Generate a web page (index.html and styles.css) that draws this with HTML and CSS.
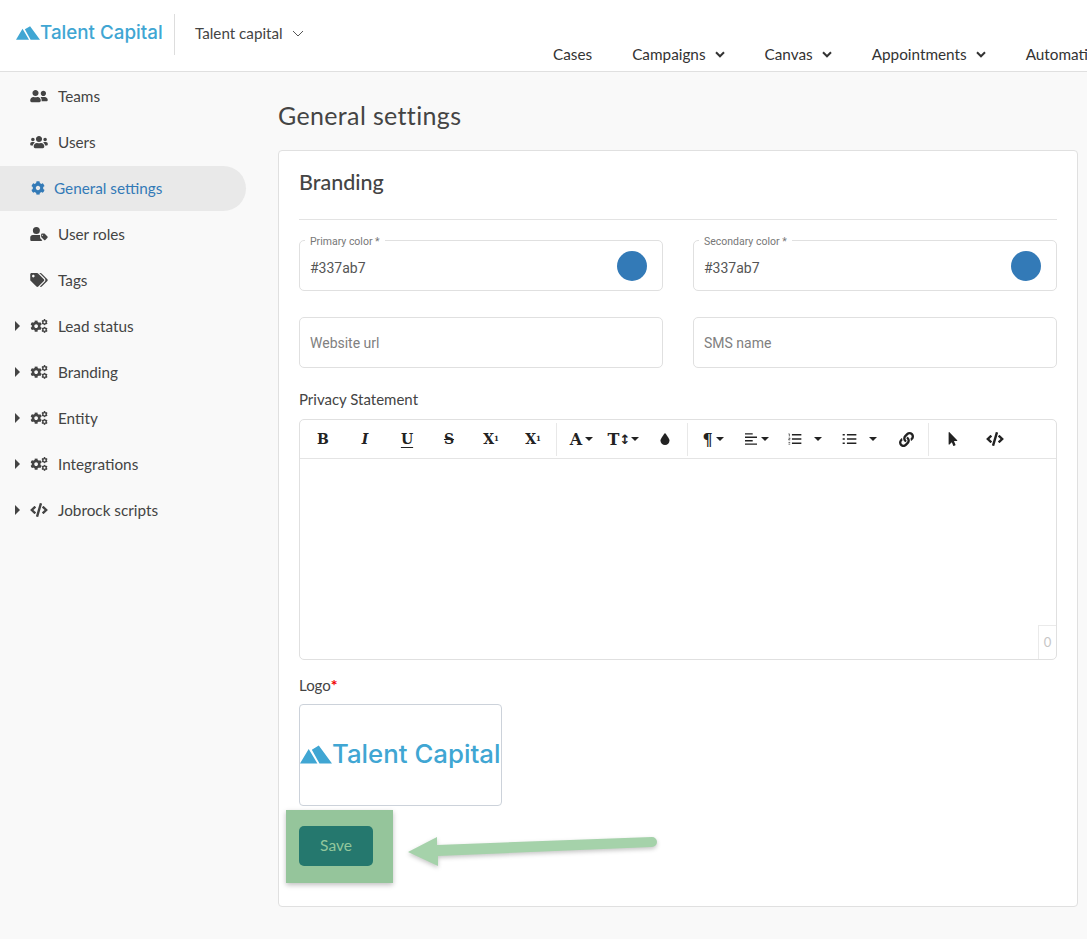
FILE: index.html
```html
<!DOCTYPE html>
<html lang="en">
<head>
<meta charset="utf-8">
<title>General settings</title>
<link rel="stylesheet" href="styles.css">
</head>
<body>
<svg class="defs" width="0" height="0" aria-hidden="true">
  <defs>
    <symbol id="cog" viewBox="0 0 512 512"><path d="M487.4 315.7l-42.6-24.6c4.3-23.2 4.3-47 0-70.2l42.6-24.6c4.9-2.8 7.1-8.6 5.5-14-11.1-35.6-30-67.8-54.7-94.6-3.8-4.1-10-5.1-14.8-2.3L380.8 110c-17.9-15.4-38.5-27.3-60.8-35.1V25.8c0-5.6-3.9-10.5-9.4-11.7-36.7-8.2-74.3-7.8-109.2 0-5.5 1.2-9.4 6.1-9.4 11.7V75c-22.2 7.9-42.8 19.8-60.8 35.1L88.7 85.5c-4.9-2.8-11-1.9-14.8 2.3-24.7 26.7-43.6 58.9-54.7 94.6-1.7 5.4.6 11.2 5.5 14L67.3 221c-4.3 23.2-4.3 47 0 70.2l-42.6 24.6c-4.9 2.8-7.1 8.6-5.5 14 11.1 35.6 30 67.8 54.7 94.6 3.8 4.1 10 5.1 14.8 2.3l42.6-24.6c17.9 15.4 38.5 27.3 60.8 35.1v49.2c0 5.6 3.9 10.5 9.4 11.7 36.7 8.2 74.3 7.8 109.2 0 5.5-1.2 9.4-6.1 9.4-11.7v-49.2c22.2-7.9 42.8-19.8 60.8-35.1l42.6 24.6c4.9 2.8 11 1.9 14.8-2.3 24.7-26.7 43.6-58.9 54.7-94.6 1.5-5.5-.7-11.3-5.6-14.1zM256 336c-44.1 0-80-35.9-80-80s35.9-80 80-80 80 35.9 80 80-35.9 80-80 80z"/></symbol>
    <symbol id="cogs" viewBox="0 0 640 512">
      <use href="#cog" x="0" y="46" width="430" height="430"/>
      <use href="#cog" x="405" y="0" width="235" height="235"/>
      <use href="#cog" x="405" y="277" width="235" height="235"/>
    </symbol>
    <symbol id="friends" viewBox="0 0 640 512"><path d="M192 256c61.9 0 112-50.1 112-112S253.9 32 192 32 80 82.1 80 144s50.1 112 112 112zm76.8 32h-8.3c-20.8 10-43.9 16-68.5 16s-47.6-6-68.5-16h-8.3C51.6 288 0 339.6 0 403.2V432c0 26.5 21.5 48 48 48h288c26.5 0 48-21.5 48-48v-28.8c0-63.6-51.6-115.2-115.2-115.2zM480 256c53 0 96-43 96-96s-43-96-96-96-96 43-96 96 43 96 96 96zm48 32h-3.8c-13.9 4.8-28.6 8-44.2 8s-30.3-3.2-44.2-8H432c-20.4 0-39.2 5.9-55.7 15.4 24.4 26.3 39.7 61.2 39.7 99.8v38.4c0 2.2-.5 4.3-.6 6.4H592c26.5 0 48-21.5 48-48 0-61.9-50.1-112-112-112z"/></symbol>
    <symbol id="users" viewBox="0 0 640 512"><path d="M96 224c35.3 0 64-28.7 64-64s-28.7-64-64-64-64 28.7-64 64 28.7 64 64 64zm448 0c35.3 0 64-28.7 64-64s-28.7-64-64-64-64 28.7-64 64 28.7 64 64 64zm32 32h-64c-17.6 0-33.5 7.1-45.1 18.6 40.3 22.1 68.9 62 75.1 109.4h66c17.7 0 32-14.3 32-32v-32c0-35.3-28.7-64-64-64zm-256 0c61.9 0 112-50.1 112-112S381.9 32 320 32 208 82.1 208 144s50.1 112 112 112zm76.8 32h-8.3c-20.8 10-43.9 16-68.5 16s-47.6-6-68.5-16h-8.3C179.6 288 128 339.6 128 403.2V432c0 26.5 21.5 48 48 48h288c26.5 0 48-21.5 48-48v-28.8c0-63.6-51.6-115.2-115.2-115.2zm-223.7-13.4C161.5 263.1 145.6 256 128 256H64c-35.3 0-64 28.7-64 64v32c0 17.7 14.3 32 32 32h65.9c6.3-47.4 34.9-87.3 75.2-109.4z"/></symbol>
    <symbol id="usertag" viewBox="0 0 640 512"><path d="M224 256a128 128 0 1 0 0-256 128 128 0 0 0 0 256zM90 288C40 288 0 328 0 378v86c0 26 22 48 48 48h352c18 0 33-10 41-24l-60-60c-14-14-21-33-21-52v-88H90z"/><path d="M630 350L530 250c-6-6-14-9-22-9h-78c-18 0-32 14-32 32v78c0 8 3 16 9 22l100 100c12 12 33 12 45 0l78-78c13-12 13-33 0-45zM450 320a20 20 0 1 1 0-40 20 20 0 0 1 0 40z"/></symbol>
    <symbol id="tags" viewBox="0 0 640 512"><path d="M497.941 225.941L286.059 14.059A48 48 0 0 0 252.118 0H48C21.49 0 0 21.49 0 48v204.118a48 48 0 0 0 14.059 33.941l211.882 211.882c18.744 18.745 49.136 18.746 67.882 0l204.118-204.118c18.745-18.745 18.745-49.137 0-67.882zM112 160c-26.51 0-48-21.49-48-48s21.49-48 48-48 48 21.49 48 48-21.49 48-48 48zm513.941 133.823L421.823 497.941c-18.745 18.745-49.137 18.745-67.882 0l-.36-.36L527.64 323.522c16.999-16.999 26.36-39.6 26.36-63.64s-9.362-46.641-26.36-63.64L331.397 0h48.721a48 48 0 0 1 33.941 14.059l211.882 211.882c18.745 18.745 18.745 49.137 0 67.882z"/></symbol>
    <symbol id="code" viewBox="0 0 640 512"><path d="M278.9 511.5l-61-17.7c-6.4-1.8-10-8.5-8.2-14.9L346.2 8.7c1.8-6.4 8.5-10 14.9-8.2l61 17.7c6.4 1.8 10 8.5 8.2 14.9L293.8 503.3c-1.9 6.4-8.5 10.1-14.9 8.2zm-114-112.2l43.5-46.4c4.6-4.9 4.3-12.7-.8-17.2L117 256l90.6-79.7c5.1-4.5 5.5-12.3.8-17.2l-43.5-46.4c-4.5-4.8-12.1-5.1-17-.5L3.8 247.2c-5.1 4.7-5.1 12.8 0 17.5l144.1 135.1c4.9 4.6 12.5 4.4 17-.5zm327.2.6l144.1-135.1c5.1-4.7 5.1-12.8 0-17.5L492.1 112.1c-4.8-4.5-12.4-4.3-17 .5L431.6 159c-4.6 4.9-4.3 12.7.8 17.2L523 256l-90.6 79.7c-5.1 4.5-5.5 12.3-.8 17.2l43.5 46.4c4.5 4.9 12.1 5.1 17 .6z"/></symbol>
    <symbol id="peaks" viewBox="0 0 46 26"><path d="M0 26L12.500 5 25 26zM17 6L27 0 46 26H28z"/></symbol>
  </defs>
</svg>

<header class="topbar">
  <div class="brand">
    <svg class="brand-mark"><use href="#peaks"/></svg>
    <span class="brand-name">Talent Capital</span>
  </div>
  <div class="org">
    <span>Talent capital</span>
    <svg class="org-chevron" viewBox="0 0 12 7"><path d="M1 1l5 5 5-5"/></svg>
  </div>
  <nav class="mainnav">
    <a class="nav-link">Cases</a>
    <a class="nav-link">Campaigns <svg class="nav-caret" viewBox="0 0 10 7"><path d="M1 1.3l4 4 4-4"/></svg></a>
    <a class="nav-link">Canvas <svg class="nav-caret" viewBox="0 0 10 7"><path d="M1 1.3l4 4 4-4"/></svg></a>
    <a class="nav-link">Appointments <svg class="nav-caret" viewBox="0 0 10 7"><path d="M1 1.3l4 4 4-4"/></svg></a>
    <a class="nav-link">Automations</a>
  </nav>
</header>

<div class="layout">
  <aside class="sidebar">
    <a class="side-item"><svg class="side-icon"><use href="#friends"/></svg>Teams</a>
    <a class="side-item"><svg class="side-icon"><use href="#users"/></svg>Users</a>
    <a class="side-item active"><svg class="side-icon cog"><use href="#cog"/></svg>General settings</a>
    <a class="side-item"><svg class="side-icon"><use href="#usertag"/></svg>User roles</a>
    <a class="side-item"><svg class="side-icon"><use href="#tags"/></svg>Tags</a>
    <a class="side-item tree"><i class="tree-caret"></i><svg class="side-icon"><use href="#cogs"/></svg>Lead status</a>
    <a class="side-item tree"><i class="tree-caret"></i><svg class="side-icon"><use href="#cogs"/></svg>Branding</a>
    <a class="side-item tree"><i class="tree-caret"></i><svg class="side-icon"><use href="#cogs"/></svg>Entity</a>
    <a class="side-item tree"><i class="tree-caret"></i><svg class="side-icon"><use href="#cogs"/></svg>Integrations</a>
    <a class="side-item tree"><i class="tree-caret"></i><svg class="side-icon"><use href="#code"/></svg>Jobrock scripts</a>
  </aside>

  <main class="content">
    <h1 class="page-title">General settings</h1>
    <section class="card">
      <h2 class="card-title">Branding</h2>
      <div class="field-grid">
        <div class="field">
          <span class="field-label">Primary color *</span>
          <span class="field-value">#337ab7</span>
          <span class="swatch"></span>
        </div>
        <div class="field">
          <span class="field-label">Secondary color *</span>
          <span class="field-value">#337ab7</span>
          <span class="swatch"></span>
        </div>
        <div class="field"><span class="placeholder">Website url</span></div>
        <div class="field"><span class="placeholder">SMS name</span></div>
      </div>

      <div class="label privacy-label">Privacy Statement</div>
      <div class="editor">
        <div class="toolbar">
          <div class="tool-group">
            <span class="tool w42 serif">B</span>
            <span class="tool w42 serif ital">I</span>
            <span class="tool w42 serif under">U</span>
            <span class="tool w42 serif strike">S</span>
            <span class="tool w42 serif">X<sub class="tiny down">1</sub></span>
            <span class="tool w42 serif">X<sup class="tiny up">1</sup></span>
          </div>
          <div class="tool-group">
            <span class="tool w43 serif big">A<i class="caret"></i></span>
            <span class="tool w41 serif big">T<span class="updown">↕</span><i class="caret tight"></i></span>
            <span class="tool w41"><svg class="tool-svg drop" viewBox="0 0 16 16"><path d="M8 0C8 0 2 7 2 10a6 6 0 0 0 12 0C14 7 8 0 8 0z"/></svg></span>
          </div>
          <div class="tool-group">
            <span class="tool w44 serif big">¶<i class="caret"></i></span>
            <span class="tool w42"><svg class="tool-svg lines" viewBox="0 0 14 14"><path d="M0 1h9M0 5h14M0 9h9M0 13h14"/></svg><i class="caret"></i></span>
            <span class="tool w55"><svg class="tool-svg lines wider" viewBox="0 0 16 14"><path d="M5 2h11M5 7h11M5 12h11"/><path class="thin" d="M1 1h1v3M1 6h2L1 8h2M1 11h2M1 13h2"/></svg><i class="caret wide"></i></span>
            <span class="tool w55"><svg class="tool-svg lines wider" viewBox="0 0 16 14"><path d="M5 2h11M5 7h11M5 12h11M0 2h2.500M0 7h2.500M0 12h2.500"/></svg><i class="caret wide"></i></span>
            <span class="tool w39"><svg class="tool-svg link" viewBox="0 0 512 512"><path d="M326.612 185.391c59.747 59.809 58.927 155.698.36 214.59-.11.12-.24.25-.36.37l-67.2 67.2c-59.27 59.27-155.699 59.262-214.96 0-59.27-59.26-59.27-155.7 0-214.96l37.106-37.106c9.84-9.84 26.786-3.3 27.294 10.606.648 17.722 3.826 35.527 9.69 52.721 1.986 5.822.567 12.262-3.783 16.612l-13.087 13.087c-28.026 28.026-28.905 73.66-1.155 101.96 28.024 28.579 74.086 28.749 102.325.51l67.2-67.19c28.191-28.191 28.073-73.757 0-101.83-3.701-3.694-7.429-6.564-10.341-8.569a16.037 16.037 0 0 1-6.947-12.606c-.396-10.567 3.348-21.456 11.698-29.806l21.054-21.055c5.521-5.521 14.182-6.199 20.584-1.731a152.482 152.482 0 0 1 20.522 17.197zM467.547 44.449c-59.261-59.262-155.69-59.27-214.96 0l-67.2 67.2c-.12.12-.25.25-.36.37-58.566 58.892-59.387 154.781.36 214.59a152.454 152.454 0 0 0 20.521 17.196c6.402 4.468 15.064 3.789 20.584-1.731l21.054-21.055c8.35-8.35 12.094-19.239 11.698-29.806a16.037 16.037 0 0 0-6.947-12.606c-2.912-2.005-6.64-4.875-10.341-8.569-28.073-28.073-28.191-73.639 0-101.83l67.2-67.19c28.239-28.239 74.3-28.069 102.325.51 27.75 28.3 26.872 73.934-1.155 101.96l-13.087 13.087c-4.35 4.35-5.769 10.79-3.783 16.612 5.864 17.194 9.042 34.999 9.69 52.721.509 13.906 17.454 20.446 27.294 10.606l37.106-37.106c59.271-59.259 59.271-155.699.001-214.959z"/></svg></span>
          </div>
          <div class="tool-group last">
            <span class="tool w42"><svg class="tool-svg pointer" viewBox="0 0 320 512"><path d="M302.189 329.126H196.105l55.831 135.993c3.889 9.428-.555 19.999-9.444 23.999l-49.165 21.427c-9.165 4-19.443-.571-23.332-9.714l-53.053-129.136-86.664 89.138C18.729 472.71 0 463.554 0 447.977V18.299C0 1.899 19.921-6.096 30.277 5.443l284.412 292.542c11.472 11.179 3.007 31.141-12.5 31.141z"/></svg></span>
            <span class="tool w42"><svg class="tool-svg codeicon"><use href="#code"/></svg></span>
          </div>
        </div>
        <div class="editor-body"><span class="counter">0</span></div>
      </div>

      <div class="label logo-label">Logo<span class="required">*</span></div>
      <div class="logo-box">
        <svg class="logo-mark"><use href="#peaks"/></svg>
        <span class="logo-name">Talent Capital</span>
      </div>

      <div class="save-row">
        <div class="save-highlight"></div>
        <button class="save-btn" type="button">Save</button>
        <svg class="arrow" viewBox="0 0 260 50" width="260" height="50">
          <path d="M3 27L32 12 32 20 247 12a5 5 0 0 1 0 10L33 31 33 41z"/>
        </svg>
      </div>
    </section>
  </main>
</div>
</body>
</html>
```

FILE: styles.css
```css
* { box-sizing: border-box; }
html, body { margin: 0; height: 939px; overflow: hidden; }
body {
  background: #f9f9f9;
  color: #444;
  font-family: Lato, "Open Sans", sans-serif;
  font-size: 15.300px;
}
.defs { position: absolute; }

/* Top bar */
.topbar {
  display: flex;
  height: 72px;
  background: #fff;
  border-bottom: 1px solid #e0e0e0;
  overflow: hidden;
}
.brand {
  display: flex;
  flex: none;
  align-items: center;
  width: 174px;
  padding: 0 0 5px 16px;
}
.brand-mark { width: 24px; height: 14px; fill: #40a6d3; flex: none; }
.brand-name {
  color: #40a6d3;
  font-family: Inter, sans-serif;
  font-size: 18.800px;
  font-weight: 500;
  line-height: 26px;
  white-space: nowrap;
}
.org {
  display: flex;
  flex: none;
  align-items: center;
  gap: 9px;
  height: 41px;
  margin-top: 14px;
  padding: 0 0 4px 20px;
  width: 379px;
  border-left: 1px solid #ddd;
  color: #444;
  font-size: 15.200px;
}
.org-chevron { width: 12px; height: 7px; fill: none; stroke: #555; stroke-width: 1; margin-top: 2px; }
.mainnav {
  display: flex;
  flex: none;
  gap: 40px;
  margin-top: 44px;
  height: 20px;
  white-space: nowrap;
  color: #333;
  font-size: 15.300px;
}
.nav-link { display: flex; align-items: center; gap: 9px; line-height: 20px; }
.nav-caret { width: 10px; height: 7px; fill: none; stroke: #333; stroke-width: 2; }

/* Layout */
.layout { display: flex; height: 867px; }
.sidebar {
  flex: none;
  width: 278px;
  padding-top: 2px;
}
.side-item {
  position: relative;
  display: flex;
  align-items: center;
  gap: 10px;
  width: 246px;
  height: 46px;
  padding: 0 0 2px 30px;
  color: #444;
  white-space: nowrap;
}
.side-item.active {
  gap: 8px;
  height: 45px;
  margin-bottom: 1px;
  padding-bottom: 1px;
  border-radius: 0 23px 23px 0;
  background: #e9e9e9;
  color: #337ab7;
}
.side-icon { width: 18px; height: 14px; fill: #444; flex: none; }
.side-icon.cog { width: 16px; fill: #337ab7; }
.tree-caret {
  position: absolute;
  left: 15px;
  top: 17px;
  border-left: 5px solid #444;
  border-top: 5px solid transparent;
  border-bottom: 5px solid transparent;
}

/* Content */
.content { flex: none; width: 800px; }
.page-title {
  margin: 0;
  padding-top: 28px;
  height: 78px;
  font-size: 25px;
  line-height: 30px;
  letter-spacing: .35px;
  font-weight: 400;
  color: #444;
}
.card {
  position: relative;
  height: 757px;
  padding: 0 20px;
  background: #fff;
  border: 1px solid #e0e0e0;
  border-radius: 4px;
}
.card-title {
  margin: 0;
  height: 69px;
  padding-top: 18px;
  border-bottom: 1px solid #e3e3e3;
  font-size: 21.500px;
  line-height: 26px;
  font-weight: 500;
  color: #444;
}
.field-grid {
  display: grid;
  grid-template-columns: 364px 364px;
  grid-auto-rows: 51px;
  column-gap: 30px;
  row-gap: 26px;
  margin-top: 20px;
}
.field {
  position: relative;
  display: flex;
  align-items: center;
  justify-content: space-between;
  padding: 0 15px 0 10px;
  border: 1px solid #e0e0e0;
  border-radius: 5px;
  font-family: Roboto, sans-serif;
  font-size: 14px;
}
.field-label {
  position: absolute;
  left: 5px;
  top: -5px;
  padding: 0 5px;
  background: #fff;
  color: #777;
  font-size: 10.500px;
  line-height: 12px;
}
.field-value { color: #555; padding-top: 5px; }
.placeholder { color: #808080; }
.swatch { width: 30px; height: 30px; border-radius: 50%; background: #337ab7; }
.label { color: #444; font-size: 15px; line-height: 20px; }
.privacy-label { margin-top: 21px; }

/* Editor */
.editor {
  height: 241px;
  margin-top: 10px;
  border: 1px solid #e0e0e0;
  border-radius: 5px;
}
.toolbar {
  display: flex;
  height: 39px;
  padding: 3px 0 2px 2px;
  border-bottom: 1px solid #e4e4e4;
}
.tool-group {
  display: flex;
  padding-right: 2px;
  margin-right: 3px;
  border-right: 1px solid #e8e8e8;
}
.tool-group.last { border-right: 0; }
.tool {
  display: flex;
  align-items: center;
  justify-content: center;
  height: 32px;
  color: #222;
}
.w39 { width: 39px; }
.w41 { width: 41px; }
.w42 { width: 42px; }
.w43 { width: 43px; }
.w44 { width: 44px; }
.w55 { width: 55px; }
.serif { font-family: "DejaVu Serif", serif; font-weight: 700; font-size: 14px; }
.big { font-size: 16px; }
.ital { font-style: italic; }
.under { text-decoration: underline; text-underline-offset: 3px; }
.strike { text-decoration: line-through; }
.tiny { font-size: 7px; line-height: 0; }
.down { vertical-align: -3px; }
.up { vertical-align: 5px; }
.updown { font-size: 13px; font-family: "DejaVu Sans", sans-serif; }
.caret {
  margin-left: 3px;
  border-top: 4px solid #222;
  border-left: 4px solid transparent;
  border-right: 4px solid transparent;
}
.caret.tight { margin-left: 1px; }
.caret.wide { margin-left: 12px; }
.tool-svg { fill: #222; }
.drop { width: 12px; height: 14px; }
.lines { width: 14px; height: 12px; fill: none; stroke: #222; stroke-width: 1.700; }
.lines.wider { width: 15px; }
.lines .thin { stroke-width: .8; }
.link { width: 15px; height: 15px; }
.pointer { width: 10px; height: 14px; }
.codeicon { width: 18px; height: 14px; }
.editor-body { position: relative; height: 200px; }
.counter {
  position: absolute;
  right: 0;
  bottom: 0;
  width: 18px;
  height: 34px;
  border-left: 1px solid #eaeaea;
  border-top: 1px solid #eaeaea;
  color: #c6c6c6;
  font-size: 13px;
  line-height: 33px;
  text-align: center;
}

/* Logo */
.logo-label { margin-top: 15px; }
.required { color: #f00000; font-size: 16px; font-weight: 700; }
.logo-box {
  display: flex;
  align-items: center;
  width: 203px;
  height: 102px;
  margin-top: 9px;
  border: 1px solid #ccd2da;
  border-radius: 4px;
  overflow: hidden;
}
.logo-mark { width: 32px; height: 19px; fill: #40a6d3; flex: none; margin-top: -2px; }
.logo-name {
  color: #40a6d3;
  font-family: Inter, sans-serif;
  font-size: 25.800px;
  font-weight: 500;
  line-height: 34px;
  white-space: nowrap;
  margin-top: -2px;
}

/* Save + annotation */
.save-row { position: relative; margin-top: 20px; height: 40px; }
.save-highlight {
  position: absolute;
  left: -13px;
  top: -16px;
  width: 107px;
  height: 73px;
  background: #95c59b;
  box-shadow: 0 2px 5px rgba(0, 0, 0, .25);
}
.save-btn {
  position: relative;
  width: 74px;
  height: 40px;
  padding: 0 0 2px;
  border: 0;
  border-radius: 5px;
  background: #25786e;
  color: #93c79c;
  font-family: Lato, sans-serif;
  font-size: 15.500px;
}
.arrow {
  position: absolute;
  left: 106px;
  top: -1px;
  fill: #a5d2aa;
  filter: drop-shadow(0 2px 2px rgba(0, 0, 0, .22));
}
```
